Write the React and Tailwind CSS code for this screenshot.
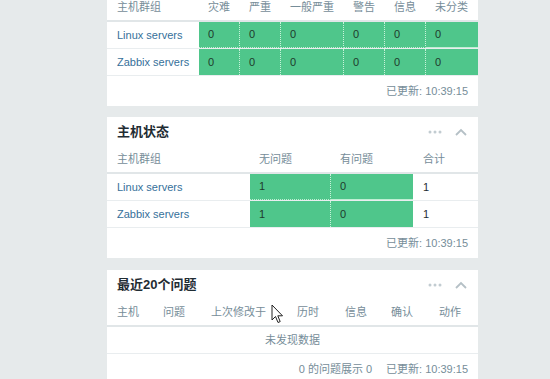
const GREEN = "bg-[#4fc68b]";

const PanelHead = ({ title }) => (
  <div className="flex h-[30px] items-center justify-between pl-[10px] pr-[11px]">
    <span className="text-[13px] font-bold text-[#1f2c33]">{title}</span>
    <div className="flex items-center gap-[13px]">
      <svg width="14" height="4" viewBox="0 0 14 4">
        <circle cx="2" cy="2" r="1.5" fill="#c2ccd1" />
        <circle cx="7" cy="2" r="1.5" fill="#c2ccd1" />
        <circle cx="12" cy="2" r="1.5" fill="#c2ccd1" />
      </svg>
      <svg width="12" height="8" viewBox="0 0 12 8">
        <path d="M1 7 L6 2 L11 7" fill="none" stroke="#b5c0c6" strokeWidth="1.8" />
      </svg>
    </div>
  </div>
);

const Footer = ({ children }) => (
  <div className="flex h-[30px] items-center justify-end gap-[14px] pr-[10px] text-[11px] text-[#768d99]">
    {children}
  </div>
);

// header row: 25px + 2px rule
const HeadRow = ({ children }) => (
  <div className="flex h-[27px] items-center border-b-2 border-[#e1e6e8] text-[11px] text-[#768d99]">
    {children}
  </div>
);

const ProblemsPanel = () => {
  const cols = [
    ["灾难", "w-[41px]"],
    ["严重", "w-[41px]"],
    ["一般严重", "w-[63px]"],
    ["警告", "w-[41px]"],
    ["信息", "w-[41px]"],
    ["未分类", "flex-1"]
  ];
  const rows = ["Linux servers", "Zabbix servers"];
  return (
    <section className="w-[371px] bg-white">
      <HeadRow>
        <div className="w-[92px] pl-[10px]">主机群组</div>
        {cols.map(([label, w]) => (
          <div key={label} className={`${w} pl-[9px]`}>{label}</div>
        ))}
      </HeadRow>
      {rows.map((name, i) => (
        <div key={name} className="flex h-[27px] border-b border-[#e9edef]">
          <div className="flex w-[92px] items-center pl-[10px] text-[11px] text-[#36709a]">{name}</div>
          {cols.map(([label, w], j) => (
            <div
              key={label}
              className={`${w} ${GREEN} flex items-center pl-[9px] text-[11px] text-[#1f3a2c] ${i === 0 ? "border-b border-b-[#bfeed3]" : ""} ${j < cols.length - 1 ? "border-r border-dotted border-r-[#c9f2da]" : ""}`}
            >
              0
            </div>
          ))}
        </div>
      ))}
      <Footer>
        <span>已更新: 10:39:15</span>
      </Footer>
    </section>
  );
};

const HostStatusPanel = () => {
  const rows = ["Linux servers", "Zabbix servers"];
  return (
    <section className="w-[371px] bg-white">
      <PanelHead title="主机状态" />
      <HeadRow>
        <div className="w-[143px] pl-[10px]">主机群组</div>
        <div className="w-[81px] pl-[9px]">无问题</div>
        <div className="w-[82px] pl-[9px]">有问题</div>
        <div className="flex-1 pl-[10px]">合计</div>
      </HeadRow>
      {rows.map((name, i) => (
        <div key={name} className="flex h-[27px] border-b border-[#e9edef] text-[11px]">
          <div className="flex w-[143px] items-center pl-[10px] text-[#36709a]">{name}</div>
          <div className={`flex w-[81px] items-center pl-[9px] text-[#1f3a2c] ${GREEN} border-r border-dotted border-r-[#c9f2da] ${i === 0 ? "border-b border-b-[#bfeed3]" : ""}`}>1</div>
          <div className={`flex w-[82px] items-center pl-[9px] text-[#1f3a2c] ${GREEN} ${i === 0 ? "border-b border-b-[#bfeed3]" : ""}`}>0</div>
          <div className="flex flex-1 items-center pl-[10px] text-[#1f2c33]">1</div>
        </div>
      ))}
      <Footer>
        <span>已更新: 10:39:15</span>
      </Footer>
    </section>
  );
};

const RecentPanel = () => {
  const cols = [
    ["主机", "w-[46px]"],
    ["问题", "w-[48px]"],
    ["上次修改于", "w-[86px]"],
    ["历时", "w-[48px]"],
    ["信息", "w-[46px]"],
    ["确认", "w-[48px]"],
    ["动作", "flex-1"]
  ];
  return (
    <section className="mt-px w-[371px] bg-white">
      <PanelHead title="最近20个问题" />
      <HeadRow>
        {cols.map(([label, w]) => (
          <div key={label} className={`${w} pl-[10px]`}>{label}</div>
        ))}
      </HeadRow>
      <div className="flex h-[27px] items-center justify-center border-b border-[#e9edef] text-[11px] text-[#768d99]">
        未发现数据
      </div>
      <Footer>
        <span>0 的问题展示 0</span>
        <span>已更新: 10:39:15</span>
      </Footer>
    </section>
  );
};

const Cursor = () => (
  <svg className="absolute left-[271px] top-[304px]" width="13" height="20" viewBox="0 0 13 20">
    <path
      d="M1 1 L1 16 L4.5 12.5 L7 18.5 L9.2 17.6 L6.8 11.8 L11.5 11.8 Z"
      fill="#ffffff"
      stroke="#222"
      strokeWidth="1"
      strokeLinejoin="round"
    />
  </svg>
);

export default function App() {
  return (
    <div
      className="relative h-[379px] w-[550px] overflow-hidden bg-[#e6eaeb]"
      style={{ fontFamily: '"Liberation Sans", Arial, "Noto Sans CJK SC", sans-serif' }}
    >
      <div className="-mt-[5px] flex flex-col gap-[11px] pl-[107px]">
        <ProblemsPanel />
        <HostStatusPanel />
        <RecentPanel />
      </div>
      <Cursor />
    </div>
  );
}
